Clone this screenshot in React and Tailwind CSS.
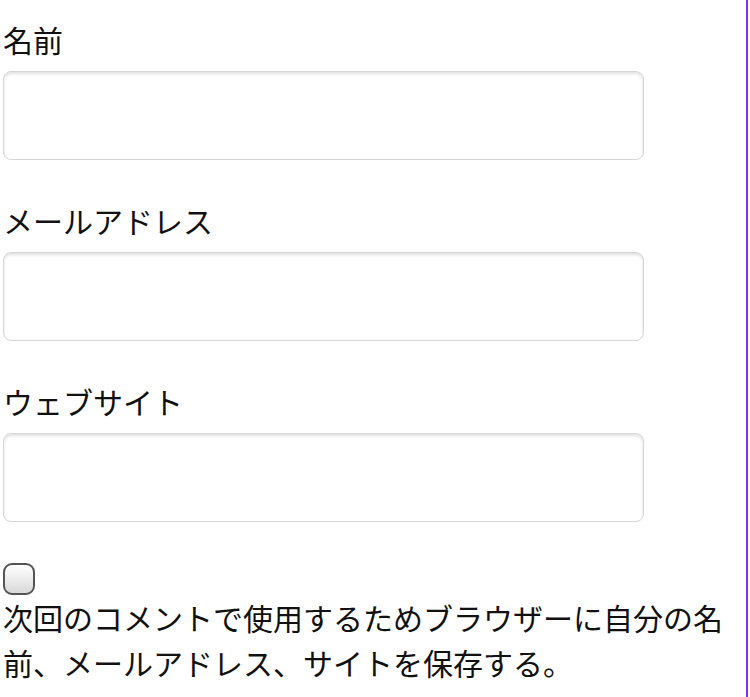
import { useState } from 'react'

const fields = [
  { name: 'author', label: '名前', type: 'text' },
  { name: 'email', label: 'メールアドレス', type: 'email' },
  { name: 'url', label: 'ウェブサイト', type: 'url' },
]

export default function App() {
  const [values, setValues] = useState({ author: '', email: '', url: '' })
  const [saveInfo, setSaveInfo] = useState(false)

  const handleChange = (e) => {
    const { name, value } = e.target
    setValues(prev => ({ ...prev, [name]: value }))
  }

  return (
    <div
      className="min-h-screen w-[748px] border-r-2 border-[#8d2fe4] bg-white pl-[3px] pt-[17px] text-[30px] leading-[45px] text-[#111]"
      style={{ fontFamily: '"Noto Sans CJK JP", "Noto Sans", sans-serif' }}
    >
      {/* Comment form fields */}
      {fields.map((field, i) => (
        <div key={field.name} className={i === 0 ? '' : 'mt-[38px]'}>
          <label htmlFor={field.name} className="block h-[45px]">
            {field.label}
          </label>
          <input
            id={field.name}
            name={field.name}
            type={field.type}
            value={values[field.name]}
            onChange={handleChange}
            className="mt-[9px] block h-[89px] w-[641px] rounded-[8px] border border-[#d6d6d6] bg-white px-3 shadow-[inset_0_2px_3px_rgba(0,0,0,0.12)] outline-none"
          />
        </div>
      ))}

      {/* Cookie consent */}
      <div className="mt-[41px]">
        <input
          id="save-info"
          type="checkbox"
          checked={saveInfo}
          onChange={(e) => setSaveInfo(e.target.checked)}
          className="block h-[32px] w-[32px] appearance-none rounded-[9px] border-2 border-[#555] bg-gradient-to-b from-white to-[#d9d9d9]"
        />
        <label htmlFor="save-info" className="block w-[740px]">
          次回のコメントで使用するためブラウザーに自分の名前、メールアドレス、サイトを保存する。
        </label>
      </div>
    </div>
  )
}
